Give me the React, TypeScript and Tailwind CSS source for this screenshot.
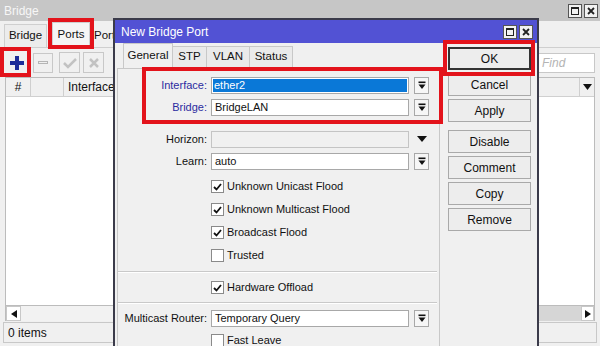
import React from "react";

const DropIcon = () => (
  <svg width="8" height="9" viewBox="0 0 8 9">
    <rect x="0.5" y="0.5" width="7" height="1.6" fill="#111" />
    <polygon points="0.5,3.5 7.5,3.5 4,8" fill="#111" />
  </svg>
);

const DropBtn = () => (
  <div className="w-[15px] h-[17px] border border-[#a8a8a8] bg-[#f6f6f6] flex items-center justify-center">
    <DropIcon />
  </div>
);

const Check = () => (
  <svg width="9" height="8" viewBox="0 0 9 8">
    <path d="M1 4 L3.5 6.5 L8 1" stroke="#111" strokeWidth="1.8" fill="none" />
  </svg>
);

const CheckRow = ({ label, checked }: { label: string; checked: boolean }) => (
  <div className="h-[23px] flex items-center">
    <div className="w-[93px]" />
    <div className="w-[13px] h-[13px] border border-[#8a8a8a] bg-white flex items-center justify-center">
      {checked && <Check />}
    </div>
    <span className="ml-[3px] text-[#111]">{label}</span>
  </div>
);

const FieldRow = ({
  label,
  value,
  blue,
  selected,
  cls = "",
}: {
  label: string;
  value: string;
  blue?: boolean;
  selected?: boolean;
  cls?: string;
}) => (
  <div className={"h-[22px] flex items-center " + cls}>
    <div className={"w-[90px] text-right pr-[1px] " + (blue ? "text-[#2b2ba0]" : "text-[#111]")}>{label}</div>
    <div className="ml-[3px] w-[198px] h-[17px] border border-[#a8a8a8] bg-white flex items-center p-[1px]">
      {selected ? (
        <div className="w-full h-full bg-[#0a78d7] text-white flex items-center pl-[1px]">{value}</div>
      ) : (
        <span className="pl-[2px] text-[#111]">{value}</span>
      )}
    </div>
    <div className="ml-[5px]">
      <DropBtn />
    </div>
  </div>
);

const Sep = ({ cls = "" }: { cls?: string }) => (
  <div className={"mr-[2px] border-t border-[#c9c9c9] border-b border-b-white " + cls} />
);

const DlgButton = ({ label, primary, cls = "" }: { label: string; primary?: boolean; cls?: string }) => (
  <div
    className={
      "h-[23px] flex items-center justify-center bg-[#ededed] text-[12px] text-[#111] " +
      (primary ? "border-2 border-[#333]" : "border border-[#a9a9a9]") +
      " " +
      cls
    }
  >
    {label}
  </div>
);

const TitleBtn = ({ kind }: { kind: "max" | "close" }) => (
  <div className="w-[14px] h-[14px] border border-[#555] bg-[#f2f2f2] flex items-center justify-center">
    {kind === "max" ? (
      <div className="w-[8px] h-[8px] border border-[#222] border-t-2" />
    ) : (
      <svg width="8" height="8" viewBox="0 0 8 8">
        <path d="M1 1 L7 7 M7 1 L1 7" stroke="#222" strokeWidth="1.8" />
      </svg>
    )}
  </div>
);

export default function App() {
  return (
    <div className="relative w-[600px] h-[346px] overflow-hidden bg-[#f0f0f0] font-['Liberation_Sans',Arial,sans-serif] text-[11px] text-[#111]">
      {/* Background window title */}
      <div className="h-[21px] bg-[#c6c6c6] flex items-center pl-[4px] pr-[2px]">
        <span className="text-[#f7f7f7] text-[12px]">Bridge</span>
        <div className="ml-auto flex gap-[2px]">
          <TitleBtn kind="max" />
          <TitleBtn kind="close" />
        </div>
      </div>
      {/* tabs */}
      <div className="h-[27px] flex items-end pl-[4px] border-b border-[#cfcfcf]">
        <div className="h-[23px] w-[43px] flex items-center justify-center border border-b-0 border-[#cfcfcf] bg-[#ececec] text-[11.5px]">Bridge</div>
        <div className="h-[25px] w-[38px] ml-[5px] flex items-center justify-center border border-b-0 border-[#cfcfcf] bg-[#f5f5f5] text-[11.5px]">Ports</div>
        <div className="h-[23px] ml-[1px] pl-[2px] flex items-center border-l border-[#cfcfcf] text-[11.5px]">Port</div>
      </div>
      {/* toolbar */}
      <div className="h-[29px] flex items-center pl-[7px] pr-[5px]">
        <div className="w-[20px] h-[20px] flex items-center justify-center">
          <svg width="14" height="14" viewBox="0 0 14 14">
            <path d="M5 0 H9 V5 H14 V9 H9 V14 H5 V9 H0 V5 H5 Z" fill="#1c2c98" />
          </svg>
        </div>
        <div className="ml-[6px] w-[20px] h-[20px] border border-[#c8c8c8] flex items-center justify-center">
          <div className="w-[10px] h-[3px] border border-[#b5b5b5]" />
        </div>
        <div className="ml-[6px] w-[21px] h-[21px] border border-[#c8c8c8] flex items-center justify-center">
          <svg width="14" height="12" viewBox="0 0 14 12">
            <path d="M1 6 L5 10 L13 2" stroke="#c2c2c2" strokeWidth="2.5" fill="none" />
          </svg>
        </div>
        <div className="ml-[3px] w-[21px] h-[21px] border border-[#c8c8c8] flex items-center justify-center">
          <svg width="12" height="12" viewBox="0 0 12 12">
            <path d="M2 2 L10 10 M10 2 L2 10" stroke="#c2c2c2" strokeWidth="2.5" />
          </svg>
        </div>
        <div className="ml-auto w-[57px] h-[20px] border border-[#c8c8c8] bg-white flex items-center pl-[3px] italic text-[#b4b4b4] text-[12px]">
          Find
        </div>
      </div>
      {/* table */}
      <div className="mx-[5px] h-[229px] border border-[#bcbcbc] bg-white flex flex-col">
        <div className="h-[19px] flex bg-[#f0f0f0] border-b border-[#d0d0d0] text-[12px]">
          <div className="w-[25px] flex items-center justify-center border-r border-[#cfcfcf]">#</div>
          <div className="w-[33px] border-r border-[#cfcfcf]" />
          <div className="flex-1 flex items-center pl-[4px]">Interface</div>
          <div className="w-[15px] border-l border-[#cfcfcf] flex items-center justify-center">
            <svg width="9" height="6" viewBox="0 0 9 6">
              <polygon points="0,0 9,0 4.5,6" fill="#111" />
            </svg>
          </div>
        </div>
      </div>
      {/* scrollbar */}
      <div className="mx-[5px] h-[15px] flex bg-[#f2f2f2] border-x border-[#bcbcbc]">
        <div className="w-[15px] border border-[#c8c8c8] bg-white flex items-center justify-center">
          <svg width="6" height="8" viewBox="0 0 6 8">
            <polygon points="6,0 6,8 0,4" fill="#111" />
          </svg>
        </div>
        <div className="flex-1 bg-[#d6d6d6] ml-[505px]" />
        <div className="w-[13px] border border-[#c8c8c8] bg-white flex items-center justify-center">
          <svg width="6" height="8" viewBox="0 0 6 8">
            <polygon points="0,0 0,8 6,4" fill="#111" />
          </svg>
        </div>
      </div>
      {/* status */}
      <div className="mx-[3px] mt-[1px] h-[21px] border border-[#c8c8c8] flex items-center pl-[4px] text-[12px]">0 items</div>

      {/* Dialog */}
      <div className="absolute left-[113px] top-[18px] w-[426px] h-[340px] bg-[#f0f0f0] border-2 border-[#3b3b4a] flex flex-col">
        <div className="h-[23px] bg-[#5252d4] flex items-center pl-[6px] pr-[4px]">
          <span className="text-white text-[12px]">New Bridge Port</span>
          <div className="ml-auto flex gap-[2px]">
            <TitleBtn kind="max" />
            <TitleBtn kind="close" />
          </div>
        </div>
        <div className="flex flex-1">
          <div className="w-[325px] flex flex-col">
            {/* tabs */}
            <div className="h-[25px] flex items-end pl-[8px]">
              <div className="h-[25px] w-[50px] flex items-center justify-center border border-b-0 border-[#c8c8c8] bg-[#f0f0f0] text-[11.5px]">General</div>
              <div className="h-[22px] w-[34px] flex items-center justify-center border border-l-0 border-[#c8c8c8] bg-[#eaeaea] text-[11.5px]">STP</div>
              <div className="h-[22px] w-[43px] flex items-center justify-center border border-l-0 border-[#c8c8c8] bg-[#eaeaea] text-[11.5px]">VLAN</div>
              <div className="h-[22px] w-[43px] flex items-center justify-center border border-l-0 border-[#c8c8c8] bg-[#eaeaea] text-[11.5px]">Status</div>
            </div>
            {/* panel */}
            <div className="ml-[2px] flex-1 border border-[#c8c8c8] flex flex-col pt-[5px]">
              <FieldRow label="Interface:" value="ether2" blue selected />
              <FieldRow label="Bridge:" value="BridgeLAN" blue />
              <div className="h-[22px] flex items-center mt-[10px]">
                <div className="w-[90px] text-right pr-[1px]">Horizon:</div>
                <div className="ml-[3px] w-[198px] h-[17px] border border-[#c4c4c4] bg-[#f0f0f0]" />
                <div className="ml-[8px]">
                  <svg width="10" height="6" viewBox="0 0 10 6">
                    <polygon points="0,0 10,0 5,6" fill="#111" />
                  </svg>
                </div>
              </div>
              <FieldRow label="Learn:" value="auto" />
              <div className="mt-[3px]" />
              <CheckRow label="Unknown Unicast Flood" checked />
              <CheckRow label="Unknown Multicast Flood" checked />
              <CheckRow label="Broadcast Flood" checked />
              <CheckRow label="Trusted" checked={false} />
              <Sep cls="mt-[4px]" />
              <div className="mt-[3px]" />
              <CheckRow label="Hardware Offload" checked />
              <Sep cls="mt-[3px]" />
              <div className="mt-[3px]" />
              <FieldRow label="Multicast Router:" value="Temporary Query" />
              <CheckRow label="Fast Leave" checked={false} />
            </div>
          </div>
          {/* buttons */}
          <div className="ml-[8px] w-[83px] flex flex-col pt-[4px]">
            <DlgButton label="OK" primary />
            <DlgButton label="Cancel" cls="mt-[3px]" />
            <DlgButton label="Apply" cls="mt-[3px]" />
            <DlgButton label="Disable" cls="mt-[8px]" />
            <DlgButton label="Comment" cls="mt-[3px]" />
            <DlgButton label="Copy" cls="mt-[3px]" />
            <DlgButton label="Remove" cls="mt-[3px]" />
          </div>
        </div>
      </div>

      {/* Red annotation boxes */}
      <div className="absolute left-[48px] top-[18px] w-[46px] h-[31px] border-4 border-[#e3131b]" />
      <div className="absolute left-0 top-[47px] w-[31px] h-[30px] border-4 border-[#e3131b]" />
      <div className="absolute left-[142px] top-[67px] w-[301px] h-[57px] border-4 border-[#e3131b]" />
      <div className="absolute left-[443px] top-[40px] w-[92px] h-[36px] border-4 border-[#e3131b]" />
    </div>
  );
}
